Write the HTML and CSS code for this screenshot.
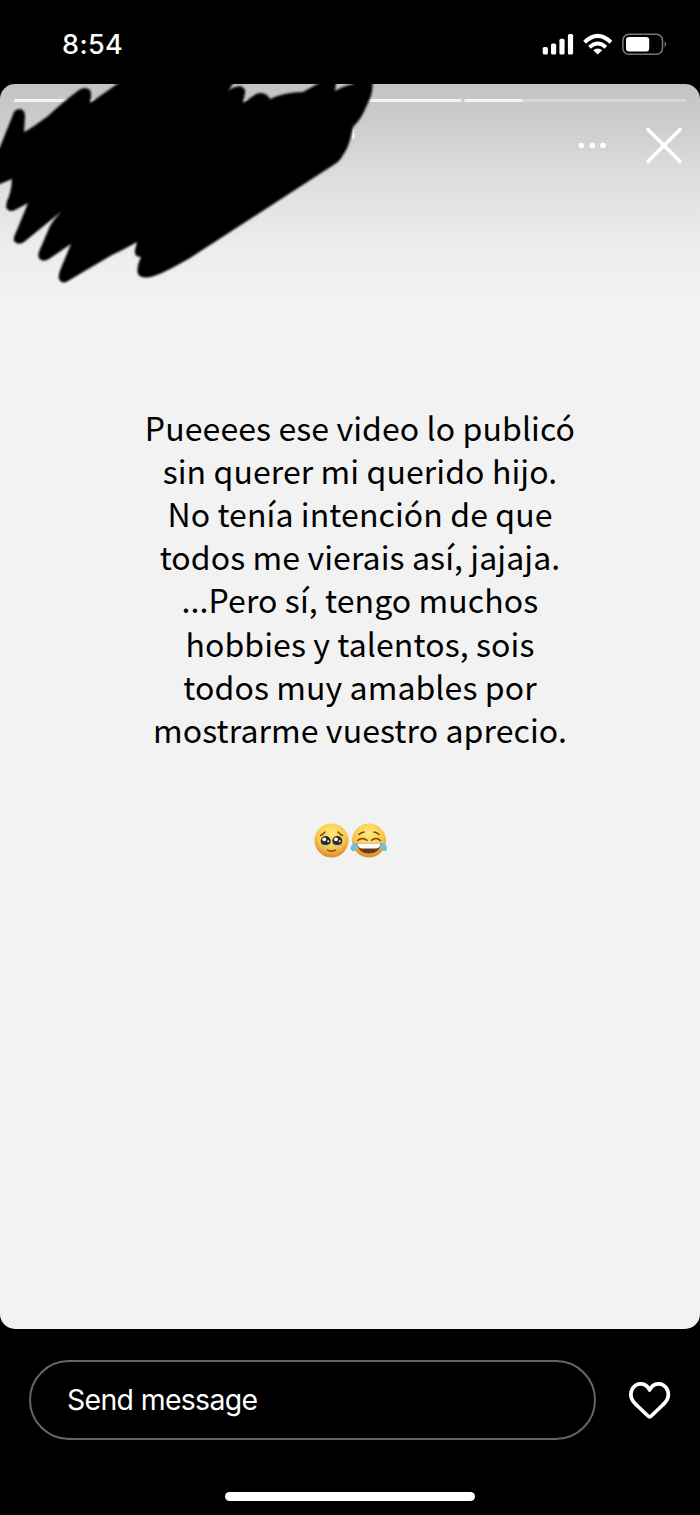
FILE: index.html
```html
<!DOCTYPE html>
<html lang="es">
<head>
<meta charset="utf-8">
<title>Story</title>
<link rel="stylesheet" href="styles.css">
</head>
<body>
<div class="phone">
  <header class="status">
    <span class="time">8:54</span>
    <svg class="indicators" width="128" height="30" viewBox="540 30 128 30">
      <g fill="#fff">
        <rect x="542.7" y="47" width="5.2" height="7.6" rx="1.6"/>
        <rect x="551" y="43.4" width="5.2" height="11.2" rx="1.6"/>
        <rect x="559.4" y="38.7" width="5.2" height="15.9" rx="1.6"/>
        <rect x="567.9" y="34" width="5.2" height="20.6" rx="1.6"/>
        <path d="M597.7 54.6 L593.2 50.2 Q597.7 46.6 602.3 50.2 Z"/>
        <rect x="626" y="36.9" width="23.2" height="14.6" rx="3"/>
      </g>
      <g fill="none" stroke="#fff" stroke-width="4">
        <path d="M584.6 42.2 Q597.7 29.6 610.9 42.2"/>
        <path d="M589.5 47.2 Q597.7 39.8 605.9 47.2"/>
      </g>
      <rect x="622.9" y="34.3" width="39.6" height="20" rx="6" fill="none" stroke="#777" stroke-width="1.6"/>
      <path d="M664.6 41 Q667.4 44.3 664.6 47.6Z" fill="#888"/>
    </svg>
  </header>

  <main class="story">
    <div class="progress">
      <i class="seg seen"></i><i class="seg seen"></i><i class="seg current"></i>
    </div>
    <div class="actions">
      <svg width="28" height="8" viewBox="0 0 28 8" fill="#fff"><circle cx="3.4" cy="3.500" r="2.8"/><circle cx="14.3" cy="3.500" r="2.8"/><circle cx="25" cy="3.500" r="2.8"/></svg>
      <svg width="40" height="40" viewBox="0 0 40 40" stroke="#fff" stroke-width="3.6" stroke-linecap="round"><path d="M4 3.500L36 35.500M36 3.500L4 35.500"/></svg>
    </div>
    <svg class="scribble" width="400" height="211" viewBox="0 84 400 211">
      <path class="glint" d="M353.3 129V139"/>
      <path class="ink" d="M-6 155L0 147L14 112Q16 109 20 109Q25 110 25 116L24 132Q29 130 48 116Q64 101 79 90Q85 86 90 90Q92 93 90 103L120 82L120 76H234V82L228 91Q232 87 240 86Q246 88 245 93L243 103L256 94Q263 91 268 96L270 99Q285 92 303 92L319 83V76H336V83L335 91Q343 86 353 84L358 76H373L372.500 85Q373 94 366 107Q362 118 353 127L350 140Q347 150 343 155Q340 161 335 164L190 258Q166 272 154 276Q142 280 138 274Q136 268 141 257Q134 257 135 250L137 242Q123 250 112 255L83 272L68 281Q62 285 59 279Q58 275 61 268L71 244L49 259Q42 263 39 258Q37 255 41 247L50 226Q54 219 62 211L24 242Q18 246 14 241Q13 238 17 230L28 203L17 209Q9 214 6 207L7 201Q11 194 12 179L0 184H-6Z"/>
    </svg>
    <p class="message">
      <span>Pueeees ese video lo publicó</span>
      <span>sin querer mi querido hijo.</span>
      <span>No tenía intención de que</span>
      <span>todos me vierais así, jajaja.</span>
      <span>...Pero sí, tengo muchos</span>
      <span>hobbies y talentos, sois</span>
      <span>todos muy amables por</span>
      <span>mostrarme vuestro aprecio.</span>
    </p>
    <svg class="emojis" width="76" height="38" viewBox="312 822 76 38">
      <defs>
        <radialGradient id="face" cx=".5" cy=".3" r=".7"><stop offset="0" stop-color="#ffe97a"/><stop offset=".6" stop-color="#f9c94c"/><stop offset="1" stop-color="#d98a2c"/></radialGradient>
      </defs>
      <circle cx="331.500" cy="840.500" r="17" fill="url(#face)"/>
      <g fill="none" stroke="#704018" stroke-width="1.400" stroke-linecap="round">
        <path d="M320.500 835.500Q323 834.500 325 832"/><path d="M338 832Q340 834.500 342.500 835.500"/>
        <path d="M327.500 850Q331.500 852.500 335.500 850"/>
      </g>
      <circle cx="325.700" cy="841" r="5" fill="#302a25"/><circle cx="337.300" cy="841" r="5" fill="#302a25"/>
      <g fill="#fff"><circle cx="324.300" cy="839.300" r="1.900"/><circle cx="336" cy="839.300" r="1.900"/><circle cx="328.100" cy="841.300" r="1"/><circle cx="339.700" cy="841.300" r="1"/></g>
      <g fill="#8cc8df"><path d="M322 843.500Q325.700 846.500 329.500 843.500L328 846H323.500Z"/><path d="M333.500 843.500Q337.300 846.500 341 843.500L339.500 846H335Z"/></g>
      <circle cx="369" cy="840.500" r="17" fill="url(#face)"/>
      <path d="M357 843.500H381Q379.500 853.500 369 853.500T357 843.500Z" fill="#683a20"/>
      <path d="M357.500 843.500H380.500Q380 848 376.500 848.500H361.500Q358 848 357.500 843.500Z" fill="#fff"/>
      <g fill="none" stroke="#704018" stroke-width="1.500" stroke-linecap="round">
        <path d="M357.500 840.500Q362.500 836.500 367 840.300"/><path d="M371.500 840.300Q376 836.500 380.500 840.500"/>
        <path d="M359 834.500Q361 832.500 364 832"/><path d="M374 832Q377 832.500 379 834.500"/>
      </g>
      <g fill="#69bfe2"><path d="M357.500 842.500Q350.500 844 350.500 848.500Q351.500 852.500 355 850.500Q357.500 848 357.500 842.500Z"/><path d="M380.500 842.500Q387 844 387 848.500Q386.500 852.500 383 850.500Q380.500 848 380.500 842.500Z"/></g>
    </svg>
  </main>

  <footer class="reply">
    <div class="field">Send message</div>
    <svg width="44" height="40" viewBox="628 1379.500 44 40" fill="none" stroke="#fff" stroke-width="3.700" stroke-linejoin="round"><path d="M649.600 1389.500C646 1381.500 636.500 1381.500 632.500 1388C629 1394.500 631.500 1400 636.500 1404.500L648 1415.500Q649.600 1417 651.200 1415.500L662.700 1404.500C667.700 1400 670.200 1394.500 666.700 1388C662.700 1381.500 653.200 1381.500 649.600 1389.500Z"/></svg>
  </footer>
  <div class="home"></div>
</div>
</body>
</html>
```
FILE: styles.css
```css
* { box-sizing: border-box; }
body { margin: 0; background: #000; }
.phone { width: 700px; height: 1515px; display: flex; flex-direction: column; background: #000; overflow: hidden; }
.status { height: 84px; flex: none; display: flex; justify-content: space-between; align-items: flex-start; padding: 30px 32px 0 62px; }
.time { font: 550 27px/30px Inter, sans-serif; color: #fff; letter-spacing: 0.4px; }
.indicators { display: block; }
.story { position: relative; height: 1245px; flex: none; border-radius: 15px; overflow: hidden; display: flex; flex-direction: column; align-items: center; background: linear-gradient(#c3c3c3 0, #cdcdcd 40px, #dedede 95px, #ececec 160px, #f2f2f2 215px); }
.progress { width: 672px; height: 3px; margin-top: 15px; display: grid; grid-template-columns: 222px 223px 222px; gap: 2.5px; }
.seg { border-radius: 2px; background: #f3f3f3; }
.seg.current { background: linear-gradient(90deg, #f3f3f3 58px, #dadada 58px); }
.actions { align-self: flex-end; display: flex; align-items: center; gap: 38px; margin: 24px 16px 0 0; }
.actions svg { display: block; }
.scribble { position: absolute; left: 0; top: 0; }
.ink { fill: #000; filter: blur(0.9px); }
.glint { stroke: #fff; stroke-width: 2; }
.message { margin: 239.8px 0 0 20px; font: 400 32px/43.15px "Noto Sans CJK SC", sans-serif; letter-spacing: 0.1px; color: #000; text-align: center; white-space: nowrap; }
.message span { display: block; }
.emojis { display: block; margin-top: 71.2px; }
.reply { display: flex; align-items: center; gap: 32px; padding: 31px 28px 0 29px; }
.field { width: 567px; height: 80px; border: 2px solid #666; border-radius: 40px; padding: 0 36px; font: 400 28.4px/76px Inter, sans-serif; letter-spacing: -0.65px; color: #fff; }
.home { width: 250px; height: 9px; border-radius: 5px; background: #fff; margin: 51.5px auto 0; }
```
